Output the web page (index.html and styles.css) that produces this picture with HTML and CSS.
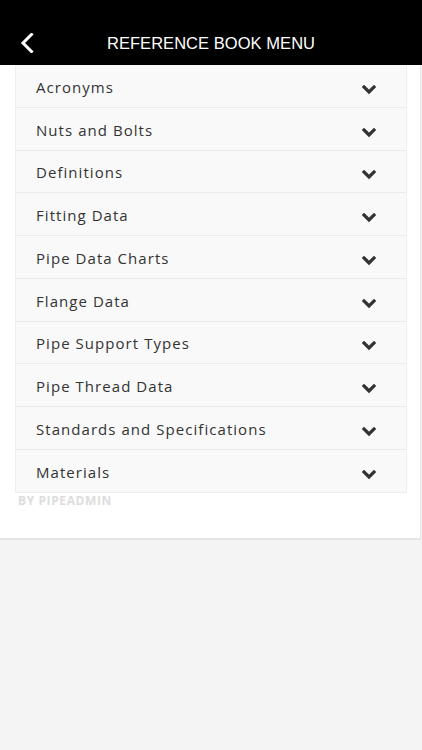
FILE: index.html
```html
<!DOCTYPE html>
<html>
<head>
<meta charset="utf-8">
<link rel="stylesheet" href="styles.css">
</head>
<body>
<header class="topbar">
  <span class="back">
    <svg width="14" height="20" viewBox="0 0 14 20"><path d="M11.5 1.5 L3 10 L11.5 18.5" fill="none" stroke="#fff" stroke-width="3" stroke-linecap="square"/></svg>
  </span>
  <h1 class="title">REFERENCE BOOK MENU</h1>
</header>
<main class="panel">
  <ul class="menu">
    <li class="item"><span>Acronyms</span><svg class="chev" viewBox="0 0 14 10"><path d="M2 2 L7 7 L12 2" fill="none" stroke="#333" stroke-width="3.2" stroke-linecap="square"/></svg></li>
    <li class="item"><span>Nuts and Bolts</span><svg class="chev" viewBox="0 0 14 10"><path d="M2 2 L7 7 L12 2" fill="none" stroke="#333" stroke-width="3.2" stroke-linecap="square"/></svg></li>
    <li class="item"><span>Definitions</span><svg class="chev" viewBox="0 0 14 10"><path d="M2 2 L7 7 L12 2" fill="none" stroke="#333" stroke-width="3.2" stroke-linecap="square"/></svg></li>
    <li class="item"><span>Fitting Data</span><svg class="chev" viewBox="0 0 14 10"><path d="M2 2 L7 7 L12 2" fill="none" stroke="#333" stroke-width="3.2" stroke-linecap="square"/></svg></li>
    <li class="item"><span>Pipe Data Charts</span><svg class="chev" viewBox="0 0 14 10"><path d="M2 2 L7 7 L12 2" fill="none" stroke="#333" stroke-width="3.2" stroke-linecap="square"/></svg></li>
    <li class="item"><span>Flange Data</span><svg class="chev" viewBox="0 0 14 10"><path d="M2 2 L7 7 L12 2" fill="none" stroke="#333" stroke-width="3.2" stroke-linecap="square"/></svg></li>
    <li class="item"><span>Pipe Support Types</span><svg class="chev" viewBox="0 0 14 10"><path d="M2 2 L7 7 L12 2" fill="none" stroke="#333" stroke-width="3.2" stroke-linecap="square"/></svg></li>
    <li class="item"><span>Pipe Thread Data</span><svg class="chev" viewBox="0 0 14 10"><path d="M2 2 L7 7 L12 2" fill="none" stroke="#333" stroke-width="3.2" stroke-linecap="square"/></svg></li>
    <li class="item"><span>Standards and Specifications</span><svg class="chev" viewBox="0 0 14 10"><path d="M2 2 L7 7 L12 2" fill="none" stroke="#333" stroke-width="3.2" stroke-linecap="square"/></svg></li>
    <li class="item"><span>Materials</span><svg class="chev" viewBox="0 0 14 10"><path d="M2 2 L7 7 L12 2" fill="none" stroke="#333" stroke-width="3.2" stroke-linecap="square"/></svg></li>
  </ul>
  <div class="byline">BY PIPEADMIN</div>
</main>
</body>
</html>
```
FILE: styles.css
```css
* { box-sizing: border-box; }
html, body { margin: 0; padding: 0; }
body {
  background: #f4f4f4;
  font-family: "Open Sans", "Liberation Sans", sans-serif;
  width: 422px;
  height: 750px;
  overflow: hidden;
}
.topbar {
  height: 65px;
  background: #000;
  display: flex;
  align-items: flex-end;
  justify-content: center;
  padding-bottom: 12px;
  position: relative;
}
.back {
  position: absolute;
  left: 20px;
  top: 33px;
  width: 14px;
  height: 20px;
  display: block;
}
.back svg { display: block; }
.title {
  margin: 0;
  color: #fff;
  font-family: "Liberation Sans", Arial, sans-serif;
  font-weight: normal;
  font-size: 16.5px;
  line-height: 20px;
  letter-spacing: 0.05px;
}
.panel {
  width: 421px;
  background: #fff;
  border-right: 1px solid #e4e4e4;
  border-bottom: 2px solid #e6e6e6;
  padding: 0 15px 30px 15px;
}
.menu {
  list-style: none;
  margin: 0;
  padding: 0;
  border-left: 1px solid #eeeeee;
  border-right: 1px solid #eeeeee;
  width: 392px;
}
.item {
  height: 42.78px;
  background: #f9f9f9;
  border-bottom: 1px solid #ececec;
  display: flex;
  align-items: center;
  justify-content: space-between;
  padding: 2px 30px 0 20px;
  color: #333;
  font-size: 15px;
  letter-spacing: 1.05px;
}
.chev {
  width: 14px;
  height: 10px;
  display: block;
  margin-top: 6px;
}
.byline {
  margin: 1px 0 0 3px;
  font-size: 12px;
  line-height: 14px;
  font-weight: 700;
  color: #dddddd;
  letter-spacing: 0.6px;
}
```
